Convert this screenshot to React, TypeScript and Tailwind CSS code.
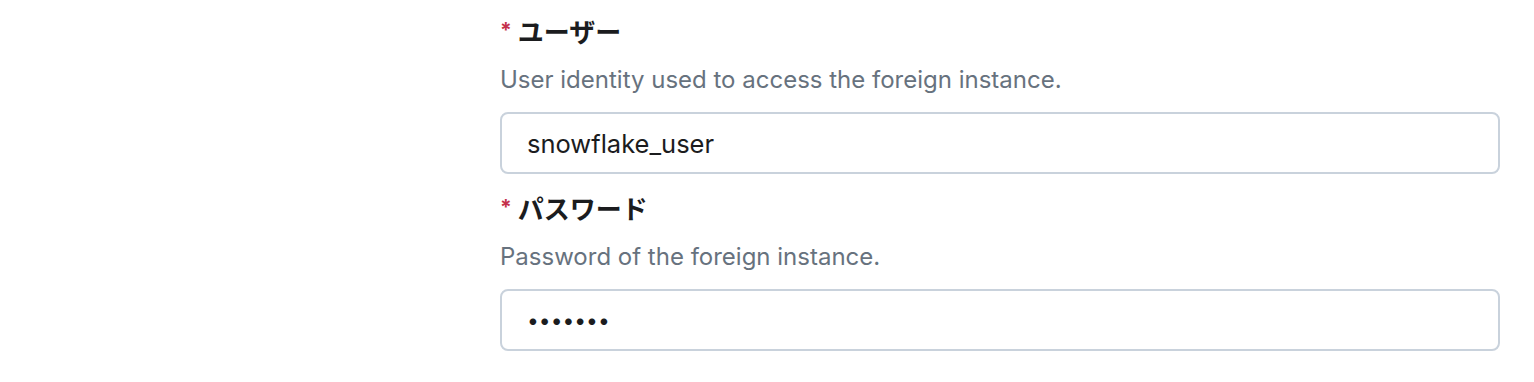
export default function App() {
  const font = {
    fontFamily: '"Inter", "Noto Sans CJK JP", sans-serif',
  };
  return (
    <div className="h-[382px] w-[1534px] bg-white" style={font}>
      <div className="ml-[500px] w-[1000px] pt-[17px]">
        <Field
          label="ユーザー"
          description="User identity used to access the foreign instance."
          value="snowflake_user"
        />
        <div className="h-[20px]" />
        <Field
          label="パスワード"
          description="Password of the foreign instance."
          value="1234567"
          password
        />
      </div>
    </div>
  );
}

function Field({
  label,
  description,
  value,
  password,
}: {
  label: string;
  description: string;
  value: string;
  password?: boolean;
}) {
  return (
    <div className="flex flex-col">
      <label className="flex h-[32px] items-center text-[26px] font-bold leading-[32px] text-[#1b1c1e]">
        <span className="mr-[6px] mt-[-6px] text-[21px] leading-none text-[#c4314b]">*</span>
        {label}
      </label>
      <p className="mt-[17px] text-[24px] leading-[28px] text-[#67727e]">
        {description}
      </p>
      <input
        type={password ? "password" : "text"}
        defaultValue={value}
        readOnly
        className={`mt-[18px] h-[62px] w-[1000px] rounded-[8px] border-2 border-[#c9d2dc] bg-white px-[25px] text-[#1b1c1e] outline-none ${
          password ? "text-[21px]" : "text-[25.5px]"
        }`}
      />
    </div>
  );
}
